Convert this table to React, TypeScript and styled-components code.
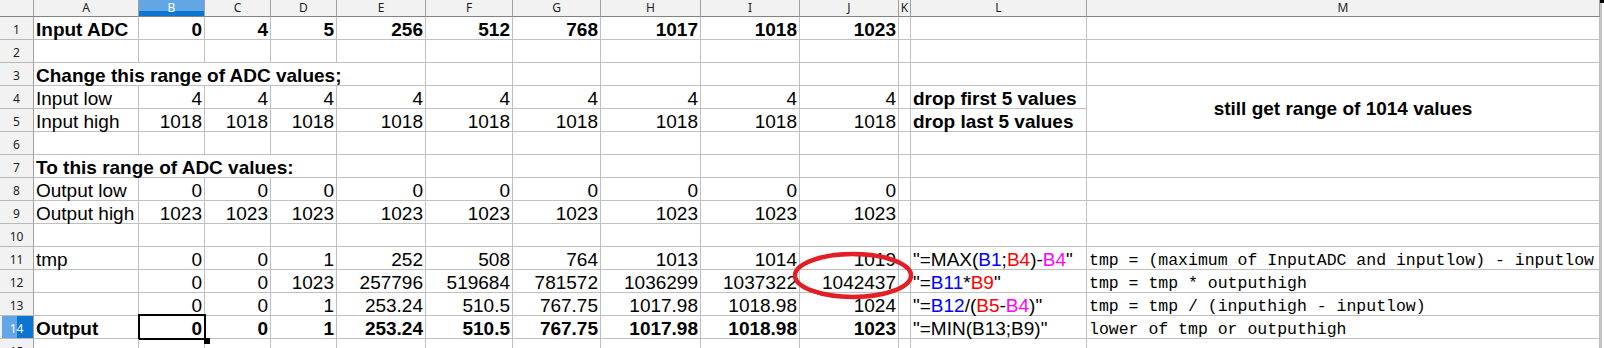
import React from 'react';
import styled, { createGlobalStyle, css } from 'styled-components';

const GlobalStyle = createGlobalStyle`
  html, body { margin: 0; padding: 0; background: #ffffff; }
  body { overflow: hidden; }
`;

const COL_WIDTHS = [105, 66, 66, 66, 89, 87, 88, 100, 99, 99, 12, 176, 513];
const COL_NAMES = ['A', 'B', 'C', 'D', 'E', 'F', 'G', 'H', 'I', 'J', 'K', 'L', 'M'];
const SELECTED_COL = 'B';
const SELECTED_ROW = 14;

const Sheet = styled.div`
  position: relative;
  width: 1604px;
  height: 348px;
  overflow: hidden;
  display: grid;
  grid-template-columns: 34px ${COL_WIDTHS.map((w) => `${w}px`).join(' ')} 4px;
  grid-template-rows: 17px;
  grid-auto-rows: 23px;
  background: #ffffff;
`;

const HeaderBase = css`
  box-sizing: border-box;
  font-family: "Noto Sans", "Open Sans", sans-serif;
  font-size: 12px;
  color: #1e1e1e;
  display: flex;
  align-items: center;
  justify-content: center;
  background: #f2f2f2;
`;

const Corner = styled.div`
  ${HeaderBase};
  border-right: 1px solid #a0a0a0;
  border-bottom: 1px solid #828282;
`;

const ColHead = styled.div<{ $selected?: boolean }>`
  ${HeaderBase};
  line-height: 16px;
  border-right: 1px solid #a0a0a0;
  border-bottom: 1px solid #828282;
  ${(p) =>
    p.$selected &&
    css`
      background: linear-gradient(to bottom, #62a6e6 0, #62a6e6 11px, #0a76d2 11px);
      color: #ffffff;
    `}
`;

const RowHead = styled.div<{ $selected?: boolean }>`
  ${HeaderBase};
  padding-top: 3px;
  border-right: 1px solid #a0a0a0;
  border-bottom: 1px solid #b8b8b8;
  ${(p) =>
    p.$selected &&
    css`
      background: linear-gradient(to right, #f2f2f2 0, #f2f2f2 2px, #62a6e6 2px, #62a6e6 17px, #0a76d2 17px);
      color: #ffffff;
    `}
`;

const Cell = styled.div<{
  $align?: 'left' | 'right' | 'center';
  $bold?: boolean;
  $mono?: boolean;
  $span?: number;
  $rowSpan?: number;
  $selected?: boolean;
}>`
  box-sizing: border-box;
  position: relative;
  border-right: 1px solid #c0c0c0;
  border-bottom: 1px solid #c0c0c0;
  padding: 3px 2px 0 2px;
  font-family: "Liberation Sans", Arial, sans-serif;
  font-size: 19px;
  line-height: 19px;
  font-weight: ${(p) => (p.$bold ? 700 : 400)};
  text-align: ${(p) => p.$align ?? 'left'};
  white-space: nowrap;
  color: #000000;
  ${(p) => p.$span && css`grid-column: span ${p.$span};`}
  ${(p) =>
    p.$mono &&
    css`
      font-family: "Liberation Mono", "Courier New", monospace;
      font-size: 16.5px;
      padding-top: 4px;
    `}
  ${(p) =>
    p.$rowSpan &&
    css`
      grid-row: span ${p.$rowSpan};
      display: flex;
      align-items: center;
      justify-content: center;
      padding: 0;
    `}
  ${(p) =>
    p.$selected &&
    css`
      &::after {
        content: '';
        position: absolute;
        left: -1px;
        top: -2px;
        right: -2px;
        bottom: -2px;
        border: 2px solid #000000;
        pointer-events: none;
      }
      &::before {
        content: '';
        position: absolute;
        right: -6px;
        bottom: -6px;
        width: 6px;
        height: 6px;
        background: #000000;
        z-index: 1;
      }
    `}
`;

const Ref = styled.span<{ $color: string }>`
  color: ${(p) => p.$color};
`;

const Edge = styled.div`
  grid-column: 15;
  grid-row: 1 / span 16;
  position: relative;
  background: linear-gradient(to right, #c4c4c4 0, #c4c4c4 2px, #ffffff 2px);
  &::before {
    content: '';
    position: absolute;
    left: 0;
    top: 0;
    width: 4px;
    height: 3px;
    background: #000000;
  }
`;

const Circle = styled.svg`
  position: absolute;
  left: 790px;
  top: 251px;
  width: 126px;
  height: 50px;
  overflow: visible;
  pointer-events: none;
`;

type CellSpec = {
  text?: React.ReactNode;
  align?: 'left' | 'right' | 'center';
  bold?: boolean;
  mono?: boolean;
  span?: number;
  rowSpan?: number;
  selected?: boolean;
};

const empty = (n: number): CellSpec[] => Array.from({ length: n }, () => ({}));
const nums = (values: (number | string)[], bold = false, selectFirst = false): CellSpec[] =>
  values.map((v, i) => ({ text: String(v), align: 'right', bold, selected: selectFirst && i === 0 }));

const BLUE = '#0000ff';
const RED = '#ff0000';
const MAGENTA = '#ff00ff';

const rows: CellSpec[][] = [
  [{ text: 'Input ADC', bold: true }, ...nums([0, 4, 5, 256, 512, 768, 1017, 1018, 1023], true), ...empty(3)],
  empty(13),
  [{ text: 'Change this range of ADC values;', bold: true, span: 5 }, ...empty(8)],
  [
    { text: 'Input low' },
    ...nums([4, 4, 4, 4, 4, 4, 4, 4, 4]),
    {},
    { text: 'drop first 5 values', bold: true },
    { text: 'still get range of 1014 values', bold: true, rowSpan: 2 },
  ],
  [{ text: 'Input high' }, ...nums([1018, 1018, 1018, 1018, 1018, 1018, 1018, 1018, 1018]), {}, { text: 'drop last 5 values', bold: true }],
  empty(13),
  [{ text: 'To this range of ADC values:', bold: true, span: 4 }, ...empty(9)],
  [{ text: 'Output low' }, ...nums([0, 0, 0, 0, 0, 0, 0, 0, 0]), ...empty(3)],
  [{ text: 'Output high' }, ...nums([1023, 1023, 1023, 1023, 1023, 1023, 1023, 1023, 1023]), ...empty(3)],
  empty(13),
  [
    { text: 'tmp' },
    ...nums([0, 0, 1, 252, 508, 764, 1013, 1014, 1019]),
    {},
    {
      text: (
        <>
          "=MAX(<Ref $color={BLUE}>B1</Ref>;<Ref $color={RED}>B4</Ref>)-<Ref $color={MAGENTA}>B4</Ref>"
        </>
      ),
    },
    { text: 'tmp = (maximum of InputADC and inputlow) - inputlow', mono: true },
  ],
  [
    {},
    ...nums([0, 0, 1023, 257796, 519684, 781572, 1036299, 1037322, 1042437]),
    {},
    {
      text: (
        <>
          "=<Ref $color={BLUE}>B11</Ref>*<Ref $color={RED}>B9</Ref>"
        </>
      ),
    },
    { text: 'tmp = tmp * outputhigh', mono: true },
  ],
  [
    {},
    ...nums([0, 0, 1, '253.24', '510.5', '767.75', '1017.98', '1018.98', 1024]),
    {},
    {
      text: (
        <>
          "=<Ref $color={BLUE}>B12</Ref>/(<Ref $color={RED}>B5</Ref>-<Ref $color={MAGENTA}>B4</Ref>)"
        </>
      ),
    },
    { text: 'tmp = tmp / (inputhigh - inputlow)', mono: true },
  ],
  [
    { text: 'Output', bold: true },
    ...nums([0, 0, 1, '253.24', '510.5', '767.75', '1017.98', '1018.98', 1023], true, true),
    {},
    { text: '"=MIN(B13;B9)"' },
    { text: 'lower of tmp or outputhigh', mono: true },
  ],
  empty(13),
];

export default function App() {
  return (
    <>
      <GlobalStyle />
      <Sheet>
        <Corner />
        {COL_NAMES.map((c) => (
          <ColHead key={c} $selected={c === SELECTED_COL}>
            {c}
          </ColHead>
        ))}
        <Edge />
        {rows.map((cells, r) => (
          <React.Fragment key={r}>
            <RowHead $selected={r + 1 === SELECTED_ROW}>{r + 1}</RowHead>
            {cells.map((c, i) => (
              <Cell
                key={i}
                $align={c.align}
                $bold={c.bold}
                $mono={c.mono}
                $span={c.span}
                $rowSpan={c.rowSpan}
                $selected={c.selected}
              >
                {c.text}
              </Cell>
            ))}
          </React.Fragment>
        ))}
        <Circle viewBox="0 0 126 50">
          <ellipse cx="63" cy="24.5" rx="58" ry="21.5" fill="none" stroke="#e31e24" strokeWidth="4.5" />
        </Circle>
      </Sheet>
    </>
  );
}
